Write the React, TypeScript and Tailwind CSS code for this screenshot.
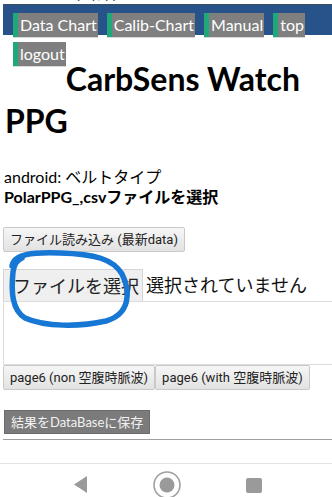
import React from 'react';

const navItems = ['Data Chart', 'Calib-Chart', 'Manual', 'top'];

const jp = "font-['Lato','Noto_Sans_CJK_JP',sans-serif]";
const btn =
  "font-['Roboto','Noto_Sans_CJK_JP',sans-serif] text-[13px] text-[#222] bg-gradient-to-b from-[#f6f6f6] to-[#e2e2e2] border border-[#c9c9c9] rounded-[2px] px-[6px] h-[25px] leading-[23px] whitespace-nowrap";

const NavItem: React.FC<{ label: string }> = ({ label }) => (
  <span className="inline-block h-[24px] leading-[24px] border-l-[5px] border-[#1fa878] bg-[#7f7f7f] pl-[2px] pr-[1px] text-[16px] text-white shadow-[0_1px_0_#d8d8d8]">
    {label}
  </span>
);

const App: React.FC = () => {
  return (
    <div className={`relative w-[332px] h-[497px] overflow-hidden bg-white text-black ${jp}`}>
      <div className="flex flex-col h-full pl-[3px]">
        {/* clipped line above header */}
        <div className="h-[4px] overflow-hidden">
          <div className="-mt-[14px] pl-[40px] text-[14px] leading-[16px] text-[#444]">user: yoy, yy</div>
        </div>

        {/* header bar */}
        <div className="h-[31px] bg-[#27538a] border-t border-[#3d4d60] flex gap-[9px] pl-[10px] pt-[8px]">
          {navItems.map(n => (
            <NavItem key={n} label={n} />
          ))}
        </div>

        <div>
          <div className="float-left ml-[10px] mt-[7px]">
            <NavItem label="logout" />
          </div>
          <h1 className="pt-[23px] pl-[2px] text-[32px] leading-[42px] font-bold">
            CarbSens Watch PPG
          </h1>
        </div>

        <div className="mt-[25px] pl-[1px] text-[16px] leading-[20px]">
          <div>android: ベルトタイプ</div>
          <div className="font-bold">PolarPPG_,csvファイルを選択</div>
        </div>

        <div className="mt-[19px]">
          <button className={btn}>ファイル読み込み (最新data)</button>
        </div>

        {/* file input */}
        <div className="mt-[17px] flex items-center">
          <button className="h-[32px] pl-[9px] pr-[3px] bg-[#efefef] border border-[#d4d4d4] border-b-0 text-[18px] leading-[30px] text-[#222]">
            ファイルを選択
          </button>
          <span className="ml-[3px] text-[18px] text-[#111]">選択されていません</span>
        </div>
        <div className="h-[64px] border-l border-t border-b border-[#dcdcdc]" />

        <div className="flex">
          <button className={btn}>page6 (non 空腹時脈波)</button>
          <button className={btn}>page6 (with 空腹時脈波)</button>
        </div>

        <div className="mt-[19px] pl-[1px]">
          <button className="h-[24px] px-[6px] bg-[#7b7b7b] border border-[#6c6c6c] text-[13px] leading-[22px] text-[#f2f2f2]">
            結果をDataBaseに保存
          </button>
        </div>

        <hr className="mt-[5px] border-t border-[#9f9f9f]" />

        {/* android navigation bar */}
        <div className="mt-auto -ml-[3px] h-[34px] border-t border-[#e3e3e3] flex items-start">
          <svg width="332" height="34" viewBox="0 0 332 34">
            <path d="M87 12 L87 29 L74 20.5 Z" fill="#9a9a9a" />
            <circle cx="167" cy="21" r="13" fill="none" stroke="#a0a0a0" strokeWidth="1.6" />
            <circle cx="167" cy="21" r="7.5" fill="#9a9a9a" />
            <rect x="246" y="14" width="16" height="15" rx="2" fill="#9a9a9a" />
          </svg>
        </div>
      </div>

      {/* hand-drawn annotation */}
      <svg className="absolute left-0 top-0 pointer-events-none" width="332" height="497" viewBox="0 0 332 497">
        <path
          d="M12 266 C 14 254, 32 252, 60 253 C 95 254, 113 259, 122 274 C 131 292, 130 314, 106 321 C 80 327, 45 327, 25 318 C 12 310, 11 292, 13 272 C 14 265, 17 260, 22 258"
          fill="none"
          stroke="#1777d4"
          strokeWidth="5.5"
          strokeLinecap="round"
          strokeLinejoin="round"
        />
      </svg>
    </div>
  );
};

export default App;
